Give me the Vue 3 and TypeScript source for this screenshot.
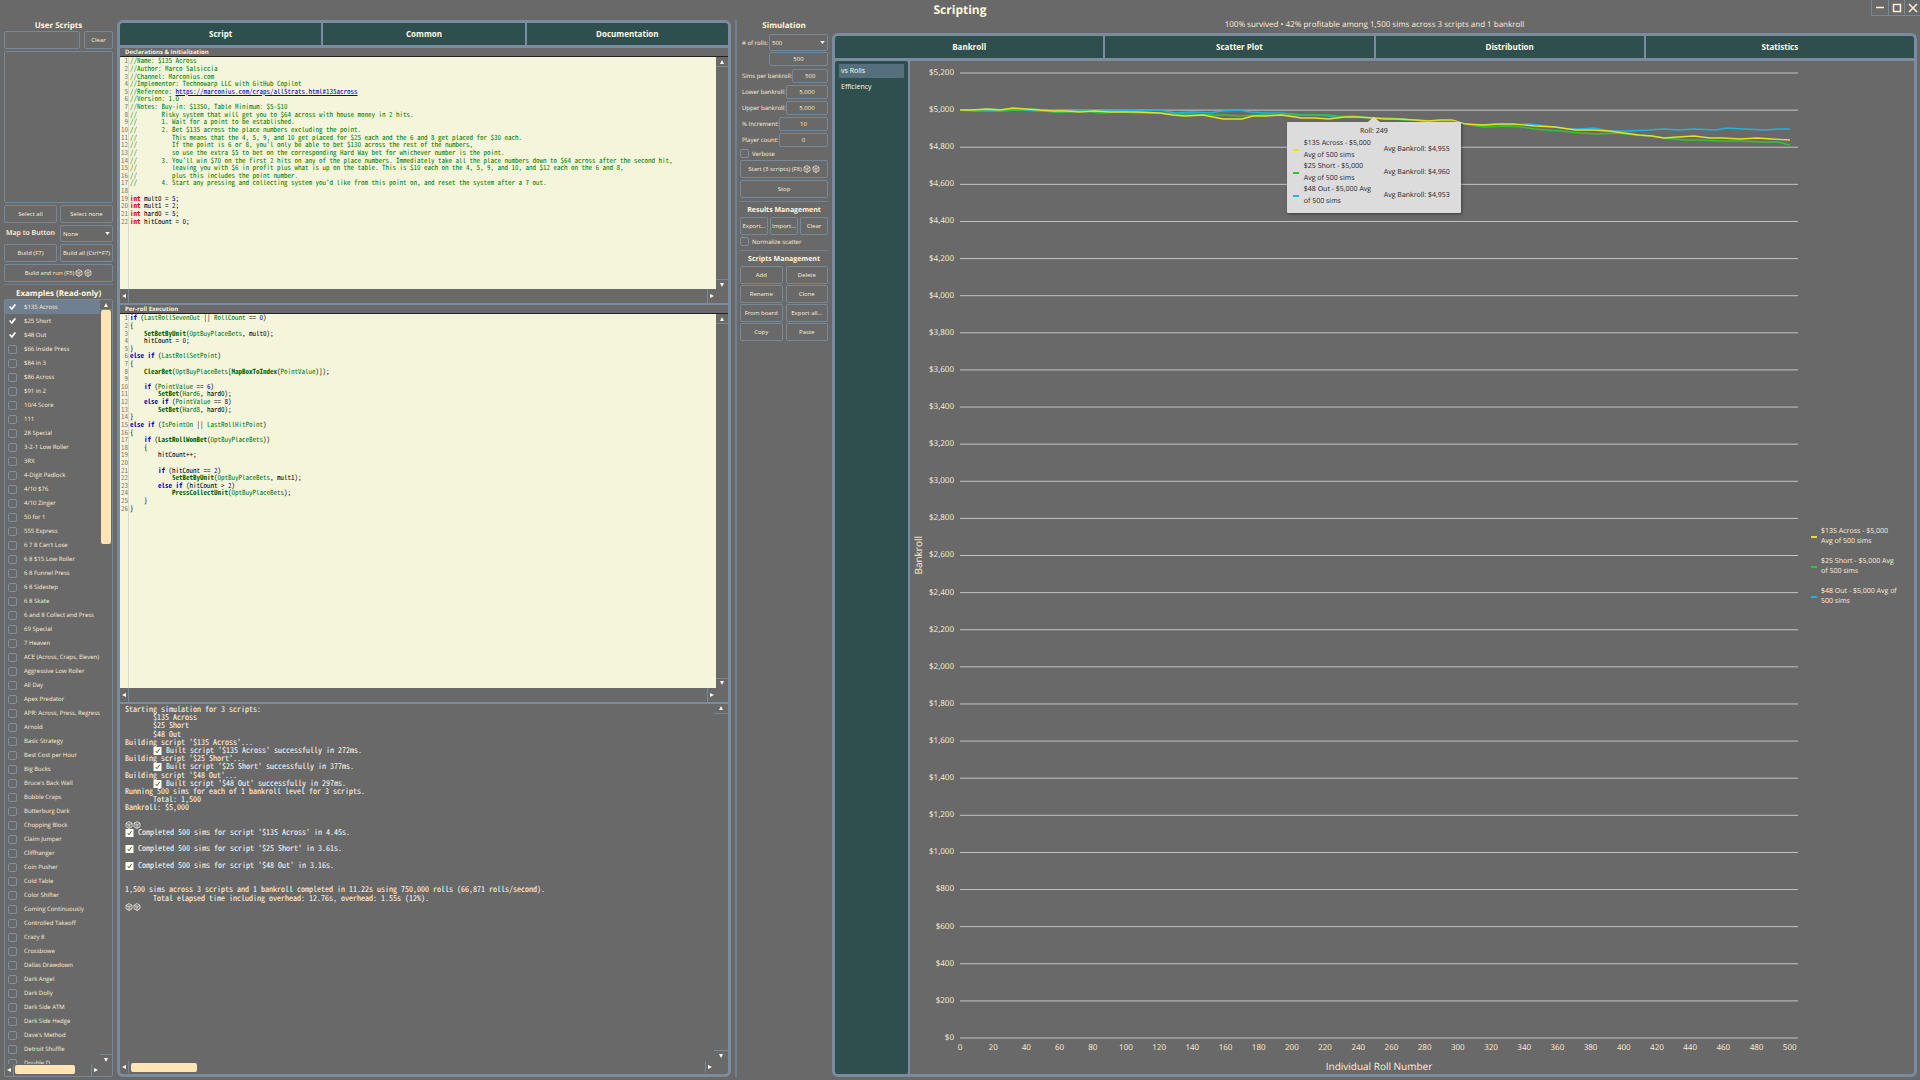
<script setup lang="ts">
import { defineComponent, h, ref } from 'vue'

interface Token { text: string; kind: string }
interface Series { legend: string; tip: string; color: string; avg: string; path: string }

const examples = ref([
  '$135 Across', '$25 Short', '$48 Out', '$66 Inside Press', '$84 in 3', '$86 Across', '$91 in 2',
  '10/4 Score', '111', '28 Special', '3-2-1 Low Roller', '3RX', '4-Digit Padlock', '4/10 $76',
  '4/10 Zinger', '50 for 1', '555 Express', "6 7 8 Can't Lose", '6 8 $15 Low Roller', '6 8 Funnel Press',
  '6 8 Sidestep', '6 8 Skate', '6 and 8 Collect and Press', '69 Special', '7 Heaven',
  'ACE (Across, Craps, Eleven)', 'Aggressive Low Roller', 'All Day', 'Apex Predator',
  'APR: Across, Press, Regress', 'Arnold', 'Basic Strategy', 'Best Cost per Hour', 'Big Bucks',
  "Bruce's Back Wall", 'Bubble Craps', 'Butterburg Dark', 'Chopping Block', 'Claim Jumper',
  'Cliffhanger', 'Coin Pusher', 'Cold Table', 'Color Shifter', 'Coming Continuously',
  'Controlled Takeoff', 'Crazy 8', 'Crossbowe', 'Dallas Drawdown', 'Dark Angel', 'Dark Dolly',
  'Dark Side ATM', 'Dark Side Hedge', "Dave's Method", 'Detroit Shuffle', 'Double D',
].map((name, i) => ({ name, checked: i < 3 })))

const declarations = `//Name: $135 Across
//Author: Marco Salsiccia
//Channel: Marconius.com
//Implementor: Technowarp LLC with GitHub Copilot
//Reference: https://marconius.com/craps/allStrats.html#135across
//Version: 1.0
//Notes: Buy-in: $1350, Table Minimum: $5-$10
//       Risky system that will get you to $64 across with house money in 2 hits.
//       1. Wait for a point to be established.
//       2. Bet $135 across the place numbers excluding the point.
//          This means that the 4, 5, 9, and 10 get placed for $25 each and the 6 and 8 get placed for $30 each.
//          If the point is 6 or 8, you'l only be able to bet $130 across the rest of the numbers,
//          so use the extra $5 to bet on the corresponding Hard Way bet for whichever number is the point.
//       3. You'll win $70 on the first 2 hits on any of the place numbers. Immediately take all the place numbers down to $64 across after the second hit,
//          leaving you with $6 in profit plus what is up on the table. This is $10 each on the 4, 5, 9, and 10, and $12 each on the 6 and 8,
//          plus this includes the point number.
//       4. Start any pressing and collecting system you'd like from this point on, and reset the system after a 7 out.

int mult0 = 5;
int mult1 = 2;
int hard0 = 5;
int hitCount = 0;`

const perRoll = `if (LastRollSevenOut || RollCount == 0)
{
    SetBetByUnit(OptBuyPlaceBets, mult0);
    hitCount = 0;
}
else if (LastRollSetPoint)
{
    ClearBet(OptBuyPlaceBets[MapBoxToIndex(PointValue)]);

    if (PointValue == 6)
        SetBet(Hard6, hard0);
    else if (PointValue == 8)
        SetBet(Hard8, hard0);
}
else if (IsPointOn || LastRollHitPoint)
{
    if (LastRollWonBet(OptBuyPlaceBets))
    {
        hitCount++;

        if (hitCount == 2)
            SetBetByUnit(OptBuyPlaceBets, mult1);
        else if (hitCount > 2)
            PressCollectUnit(OptBuyPlaceBets);
    }
}`

function tokenize(line: string): Token[] {
  if (line.startsWith('//')) {
    const at = line.indexOf('https://')
    if (at < 0) return [{ text: line, kind: 'comment' }]
    return [{ text: line.slice(0, at), kind: 'comment' }, { text: line.slice(at), kind: 'link' }]
  }
  const parts = line.match(/[A-Za-z_]\w*\(?|\d+|[^A-Za-z_\d]+/g) ?? []
  return parts.flatMap((p): Token[] => {
    if (p === 'int') return [{ text: p, kind: 'type' }]
    if (p === 'if' || p === 'else') return [{ text: p, kind: 'keyword' }]
    if (/^\d/.test(p)) return [{ text: p, kind: 'number' }]
    if (p.endsWith('(')) return [{ text: p.slice(0, -1), kind: 'call' }, { text: '(', kind: 'plain' }]
    if (/^[A-Z]/.test(p)) return [{ text: p, kind: 'member' }]
    return [{ text: p, kind: 'plain' }]
  })
}

const editors = [
  { title: 'Declarations & Initialization', cls: 'decl', lines: declarations.split('\n').map(tokenize) },
  { title: 'Per-roll Execution', cls: 'roll', lines: perRoll.split('\n').map(tokenize) },
]

const log: { text: string; icon?: 'ok' | 'dice'; indent?: boolean }[] = [
  { text: 'Starting simulation for 3 scripts:' },
  { text: '$135 Across', indent: true },
  { text: '$25 Short', indent: true },
  { text: '$48 Out', indent: true },
  { text: "Building script '$135 Across'..." },
  { text: "Built script '$135 Across' successfully in 272ms.", icon: 'ok', indent: true },
  { text: "Building script '$25 Short'..." },
  { text: "Built script '$25 Short' successfully in 377ms.", icon: 'ok', indent: true },
  { text: "Building script '$48 Out'..." },
  { text: "Built script '$48 Out' successfully in 297ms.", icon: 'ok', indent: true },
  { text: 'Running 500 sims for each of 1 bankroll level for 3 scripts.' },
  { text: 'Total: 1,500', indent: true },
  { text: 'Bankroll: $5,000' },
  { text: '' },
  { text: '', icon: 'dice' },
  { text: "Completed 500 sims for script '$135 Across' in 4.45s.", icon: 'ok' },
  { text: '' },
  { text: "Completed 500 sims for script '$25 Short' in 3.61s.", icon: 'ok' },
  { text: '' },
  { text: "Completed 500 sims for script '$48 Out' in 3.16s.", icon: 'ok' },
  { text: '' },
  { text: '' },
  { text: '1,500 sims across 3 scripts and 1 bankroll completed in 11.22s using 750,000 rolls (66,871 rolls/second).' },
  { text: 'Total elapsed time including overhead: 12.76s, overhead: 1.55s (12%).', indent: true },
  { text: '', icon: 'dice' },
]

const params = ref([
  { id: 'sims', label: 'Sims per bankroll:', value: '500', width: 'w36' },
  { id: 'lower', label: 'Lower bankroll:', value: '5,000', width: 'w42' },
  { id: 'upper', label: 'Upper bankroll:', value: '5,000', width: 'w42' },
  { id: 'increment', label: '% Increment:', value: '10', width: 'w49' },
  { id: 'players', label: 'Player count:', value: '0', width: 'w49' },
])
const scriptActions = ['Add', 'Delete', 'Rename', 'Clone', 'From board', 'Export all...', 'Copy', 'Paste']
const scriptTabs = ['Script', 'Common', 'Documentation']
const chartTabs = ['Bankroll', 'Scatter Plot', 'Distribution', 'Statistics']

const yLabels = Array.from({ length: 27 }, (_, i) => '$' + (5200 - i * 200).toLocaleString('en-US'))
const xLabels = Array.from({ length: 26 }, (_, i) => i * 20)
const gridY = Array.from({ length: 27 }, (_, i) => (i * 965) / 26)

const series: Series[] = [
  {
    legend: '$48 Out - $5,000 Avg of\n500 sims', tip: '$48 Out - $5,000 Avg\nof 500 sims', color: '#1fb4dc', avg: '$4,953',
    path: '0,37 20,38 40,38 60,37 80,38 100,39 120,38 140,37 160,37 180,38 200,37 215,40 232,39 250,40 262,38 280,37 290,39 305,40 321,40 342,42 360,42 376,44 392,43 413,45 428,45 443,46 460,48 477,49 500,50 519,53 534,51 548,52 570,51 595,54 607,56 620,56 634,55 650,58 666,58 690,57 704,56 718,57 735,56 755,57 767,55 784,56 805,57 818,56 830,56',
  },
  {
    legend: '$25 Short - $5,000 Avg\nof 500 sims', tip: '$25 Short - $5,000\nAvg of 500 sims', color: '#33c433', avg: '$4,960',
    path: '0,37 15,38 30,36 45,37 60,37 75,36 93,39 110,39 125,38 140,40 160,39 180,40 200,40 215,41 232,41 250,42 265,42 280,43 300,42 325,42 345,42 369,42 384,44 400,44 413,45 428,45 443,47 458,47 473,48 488,48 500,50 523,54 545,53 561,54 575,56 586,57 600,58 620,60 637,61 658,60 675,62 690,63 704,65 725,67 740,67 759,68 780,68 800,69 818,69 830,72',
  },
  {
    legend: '$135 Across - $5,000\nAvg of 500 sims', tip: '$135 Across - $5,000\nAvg of 500 sims', color: '#e6e01e', avg: '$4,955',
    path: '0,37 12,37 27,36 40,37 53,35 66,36 80,37 93,38 106,38 120,39 135,38 150,39 175,39 200,40 213,42 225,43 243,42 253,44 263,46 282,46 293,43 306,43 321,42 342,45 355,45 369,46 384,44 397,44 413,45 425,46 439,46 455,47 468,48 480,47 492,47 506,51 523,52 540,51 553,51 575,53 595,54 616,57 632,57 649,58 664,60 679,62 692,63 704,65 718,64 734,63 750,65 763,65 780,66 797,65 812,66 830,67',
  },
]
const legend = [...series].reverse()

const Dice = defineComponent(() => () =>
  h('svg', { viewBox: '0 0 16 16', width: 8, height: 8, fill: 'none', stroke: 'currentColor', 'stroke-width': 1.4, 'aria-hidden': 'true', style: { flex: 'none' } }, [
    h('path', { d: 'M8 1 14 4.5v7L8 15l-6-3.500v-7zM2 4.500l6 3.500 6-3.500M8 8v7' }),
    h('path', { d: 'M7.200 4.300h1.600M4.500 8.500v.8M5.500 11.500v.8M10.500 9.500v.8M12 10.500v.8', 'stroke-width': 1.8 }),
  ]))
const Arrow = defineComponent((p: { dir: string }) => () => {
  const d: Record<string, string> = { up: 'M1 5 3 1l2 4z', down: 'M1 1h4L3 5z', left: 'M5 1v4L1 3z', right: 'M1 1v4l4-2z' }
  return h('svg', { viewBox: '0 0 6 6', width: 6, height: 6, fill: '#fff8e6', 'aria-hidden': 'true' }, [h('path', { d: d[p.dir] })])
}, { props: ['dir'] })
</script>

<template>
  <div class="app">
    <header class="titlebar">
      <span></span>
      <h1>Scripting</h1>
      <div class="window-buttons">
        <button aria-label="Minimize"><svg viewBox="0 0 10 10" width="10" height="10"><path d="M1 4.500h8" /></svg></button>
        <button aria-label="Maximize"><svg viewBox="0 0 10 10" width="10" height="10"><path d="M1.500 1.500h7v7h-7z" /></svg></button>
        <button aria-label="Close"><svg viewBox="0 0 10 10" width="10" height="10"><path d="M1 1l8 8M9 1l-8 8" /></svg></button>
      </div>
    </header>

    <aside class="scripts">
      <h2>User Scripts</h2>
      <div class="search">
        <input type="text" aria-label="Filter scripts" />
        <button class="btn">Clear</button>
      </div>
      <div class="user-list"></div>
      <div class="pair">
        <button class="btn">Select all</button>
        <button class="btn">Select none</button>
      </div>
      <div class="pair">
        <label class="map" for="map">Map to Button</label>
        <span class="select"><select id="map"><option>None</option></select><svg viewBox="0 0 6 4" width="5" height="3"><path d="M0 0h6L3 4z" /></svg></span>
      </div>
      <div class="pair">
        <button class="btn">Build (F7)</button>
        <button class="btn">Build all (Ctrl+F7)</button>
      </div>
      <button class="btn wide">Build and run (F5) <Dice /><Dice /></button>
      <hr />
      <h2>Examples (Read-only)</h2>
      <div class="examples">
        <ul>
          <li v-for="(e, i) in examples" :key="e.name" :class="{ selected: i === 0 }">
            <label><input type="checkbox" v-model="e.checked" />{{ e.name }}</label>
          </li>
        </ul>
        <div class="vbar">
          <button aria-label="Scroll up"><Arrow dir="up" /></button>
          <div class="track"><div class="thumb"></div></div>
          <button aria-label="Scroll down"><Arrow dir="down" /></button>
        </div>
        <div class="hbar">
          <button aria-label="Scroll left"><Arrow dir="left" /></button>
          <div class="track"><div class="thumb"></div></div>
          <button aria-label="Scroll right"><Arrow dir="right" /></button>
        </div>
      </div>
    </aside>

    <main class="panel center">
      <nav class="tabs"><button v-for="t in scriptTabs" :key="t">{{ t }}</button></nav>
      <section v-for="ed in editors" :key="ed.cls" class="editor" :class="ed.cls">
        <h3>{{ ed.title }}</h3>
        <div class="code">
          <div class="lines">
            <div v-for="(line, n) in ed.lines" :key="n" class="line">
              <span class="no">{{ n + 1 }}</span>
              <code><template v-for="(t, k) in line" :key="k"><a v-if="t.kind === 'link'" :href="t.text">{{ t.text }}</a><span v-else :class="t.kind">{{ t.text }}</span></template></code>
            </div>
          </div>
        </div>
        <div class="vbar">
          <button aria-label="Scroll up"><Arrow dir="up" /></button>
          <div class="track"></div>
          <button aria-label="Scroll down"><Arrow dir="down" /></button>
        </div>
        <div class="hbar">
          <button aria-label="Scroll left"><Arrow dir="left" /></button>
          <div class="track"></div>
          <button aria-label="Scroll right"><Arrow dir="right" /></button>
        </div>
      </section>
      <section class="console">
        <div class="log">
          <div v-for="(l, i) in log" :key="i" class="entry" :class="{ indent: l.indent }">
            <svg v-if="l.icon === 'ok'" viewBox="0 0 9 9" width="9" height="8"><rect width="9" height="9" fill="#fffff0" /><path d="M2.500 4.500 4 6.500 7 2" fill="none" stroke="#444" /></svg>
            <template v-if="l.icon === 'dice'"><Dice /><Dice /></template>
            <span>{{ l.text }}</span>
          </div>
        </div>
        <div class="vbar">
          <button aria-label="Scroll up"><Arrow dir="up" /></button>
          <div class="track"></div>
          <button aria-label="Scroll down"><Arrow dir="down" /></button>
        </div>
        <div class="hbar">
          <button aria-label="Scroll left"><Arrow dir="left" /></button>
          <div class="track"><div class="thumb"></div></div>
          <button aria-label="Scroll right"><Arrow dir="right" /></button>
        </div>
      </section>
    </main>

    <aside class="simulation">
      <h2 class="main-title">Simulation</h2>
      <div class="field first">
        <label for="rolls"># of rolls:</label>
        <span class="select w59"><select id="rolls"><option>500</option></select><svg viewBox="0 0 6 4" width="5" height="3"><path d="M0 0h6L3 4z" /></svg></span>
      </div>
      <div class="field end"><input class="w59" type="text" value="500" aria-label="Custom number of rolls" /></div>
      <div v-for="p in params" :key="p.id" class="field">
        <label :for="p.id">{{ p.label }}</label>
        <input :id="p.id" :class="p.width" type="text" v-model="p.value" />
      </div>
      <label class="check"><input type="checkbox" />Verbose</label>
      <button class="btn wide">Start (3 scripts) (F8) <Dice /><Dice /></button>
      <button class="btn wide">Stop</button>
      <hr />
      <h2>Results Management</h2>
      <div class="triple">
        <button class="btn">Export...</button>
        <button class="btn">Import...</button>
        <button class="btn">Clear</button>
      </div>
      <label class="check norm"><input type="checkbox" />Normalize scatter</label>
      <hr />
      <h2>Scripts Management</h2>
      <div class="actions"><button v-for="a in scriptActions" :key="a" class="btn">{{ a }}</button></div>
    </aside>

    <section class="results">
      <p class="summary">100% survived • 42% profitable among 1,500 sims across 3 scripts and 1 bankroll</p>
      <div class="panel">
        <nav class="tabs"><button v-for="t in chartTabs" :key="t">{{ t }}</button></nav>
        <div class="body">
          <nav class="views">
            <button class="active">vs Rolls</button>
            <button>Efficiency</button>
          </nav>
          <div class="chart">
            <div class="y-title"><span>Bankroll</span></div>
            <div class="y-labels"><span v-for="y in yLabels" :key="y">{{ y }}</span></div>
            <div class="plot">
              <svg viewBox="0 0 838 965" preserveAspectRatio="none">
                <line v-for="y in gridY" :key="y" x1="0" x2="838" :y1="y" :y2="y" />
                <polyline v-for="s in series" :key="s.legend" :points="s.path" :stroke="s.color" />
              </svg>
              <div class="tooltip">
                <div class="tip-title">Roll: 249</div>
                <div v-for="s in legend" :key="s.tip" class="tip-row">
                  <i :style="{ background: s.color }"></i>
                  <span class="tip-name">{{ s.tip }}</span>
                  <span class="tip-value">Avg Bankroll: {{ s.avg }}</span>
                </div>
              </div>
            </div>
            <div class="legend">
              <div v-for="s in legend" :key="s.legend"><i :style="{ background: s.color }"></i><span>{{ s.legend }}</span></div>
            </div>
            <div class="x-labels"><span v-for="x in xLabels" :key="x"><b>{{ x }}</b></span></div>
            <div class="x-title">Individual Roll Number</div>
          </div>
        </div>
      </div>
    </section>
  </div>
</template>

<style>
body { background: #696969; }
</style>

<style scoped>
.app {
  --line: #778899;
  --edge: #708090;
  --text: #ffefd5;
  --teal: #2f4f4f;
  --thumb: #ffe4b5;
  box-sizing: border-box;
  height: 100vh;
  min-height: 720px;
  display: grid;
  grid-template-columns: 117px minmax(0, 614fr) 101px minmax(0, 1085fr);
  grid-template-rows: 20px minmax(0, 1fr);
  padding: 0 3px 3px 0;
  background: #696969;
  color: var(--text);
  font: 6px/8px "Open Sans", "Noto Sans", sans-serif;
  text-rendering: geometricPrecision;
}
.app *, .app *::before { box-sizing: border-box; }
button, input, select { font: inherit; color: inherit; background: none; border: 0; margin: 0; padding: 0; min-width: 0; outline: none; }
h1, h2, h3, p, ul { margin: 0; padding: 0; font-size: inherit; }
h2 { font-size: 8px; line-height: 10px; font-weight: 700; text-align: center; color: #fff8dc; white-space: nowrap; }
hr { width: 100%; height: 1px; border: 0; margin: 0; background: var(--edge); }

.titlebar { grid-column: 1 / -1; display: grid; grid-template-columns: 1fr auto 1fr; margin-right: -3px; }
.titlebar h1 { font-size: 12px; line-height: 20px; font-weight: 700; color: #fff8dc; }
.window-buttons { justify-self: end; display: flex; height: 16px; border: solid var(--line); border-width: 0 0 1px 1px; }
.window-buttons button { width: 16px; height: 15px; display: grid; place-items: center; }
.window-buttons button + button { border-left: 1px solid var(--line); }
.window-buttons svg { fill: none; stroke: #ffefd5; stroke-width: 1.5; }

.btn { height: 18px; border: 1px solid var(--line); border-radius: 2px; display: flex; align-items: center; justify-content: center; gap: 1px; white-space: nowrap; }
.wide { width: 100%; flex: none; }
input[type='text'] { border: 1px solid var(--line); border-radius: 2px; }
input[type='checkbox'] { appearance: none; flex: none; width: 9px; height: 9px; border: 1px solid #8090a0; border-radius: 2px; display: grid; place-items: center; }
input[type='checkbox']:checked { border-color: transparent; }
input[type='checkbox']:checked::before { content: ''; width: 7px; height: 7px; background: #fff; clip-path: polygon(0 50%, 18% 36%, 38% 62%, 82% 5%, 100% 20%, 42% 95%); }
.select { position: relative; display: block; height: 17px; }
.select select { appearance: none; width: 100%; height: 100%; padding-left: 2px; border: 1px solid var(--line); border-radius: 2px; }
.select svg { position: absolute; right: 3px; top: 7px; fill: #fff; pointer-events: none; }

.scripts { display: flex; flex-direction: column; padding: 0 4px; min-height: 0; }
.scripts > h2 { margin-top: 1px; }
.search { display: flex; gap: 4px; }
.search input { flex: 1; height: 18px; }
.search .btn { width: 29px; }
.user-list { flex: none; height: 152px; margin: 2px 0; border: 1px solid var(--line); border-radius: 2px; }
.pair { display: grid; grid-template-columns: 1fr 1fr; gap: 3px; margin-bottom: 2px; align-items: center; }
.map { font-size: 7px; font-weight: 600; text-align: center; white-space: nowrap; color: #fff8dc; }
.scripts > hr { margin: 2px 0 3px; flex: none; }
.examples { flex: 1; min-height: 0; display: grid; grid-template: minmax(0, 1fr) 12px / minmax(0, 1fr) 12px; border: 1px solid var(--line); border-radius: 2px; }
.examples ul { list-style: none; overflow: hidden; min-height: 0; }
.examples li label { display: flex; align-items: center; gap: 7px; height: 14px; padding-left: 3px; white-space: nowrap; }
.examples .selected { background: var(--edge); }
.examples .vbar .thumb { height: 234px; width: 10px; margin-left: 1px; }

.vbar { display: flex; flex-direction: column; min-height: 0; }
.hbar { display: flex; }
.track { flex: 1; min-width: 0; min-height: 0; }
.thumb { background: var(--thumb); border-radius: 2px; }
.vbar button, .hbar button { flex: none; display: grid; place-items: center; }
.vbar button { height: 10px; }
.vbar button:first-child { border-bottom: 1px solid var(--line); }
.vbar button:last-child { border-top: 1px solid var(--line); }
.hbar button { width: 9px; }
.hbar button:first-child { border-right: 1px solid var(--line); }
.hbar button:last-child { border-left: 1px solid var(--line); }
.hbar .thumb { height: 9px; width: 60px; margin: 1px 0 0 1px; }

.panel { border: 3px solid #7a8c9e; border-radius: 6px; display: flex; flex-direction: column; min-height: 0; min-width: 0; }
.tabs { flex: none; display: flex; height: 25px; background: var(--teal); border-bottom: 3px solid #7a8c9e; border-radius: 3px 3px 0 0; }
.tabs button { flex: 1; font-size: 8px; font-weight: 700; color: #fffbe8; }
.tabs button + button { border-left: 2px solid #7a8c9e; }

.editor { flex: none; display: grid; grid-template: 9px minmax(0, 1fr) 14px / minmax(0, 1fr) 12px; border-bottom: 2px solid #7a8c9e; }
.editor h3 { grid-column: 1 / -1; padding-left: 5px; font-size: 6px; line-height: 8px; font-weight: 700; border-bottom: 1px solid #222; }
.decl { height: 257px; }
.roll { flex: 399 1 0; }
.console { flex: 372 1 0; min-height: 0; display: grid; grid-template: minmax(0, 1fr) 14px / minmax(0, 1fr) 14px; }
.code { background: #f5f5dc linear-gradient(#d8dcc8, #d8dcc8) 8px 0 / 1px 100% no-repeat; color: #000; overflow: hidden; padding-top: 1px; }
.lines { display: grid; grid-auto-rows: minmax(0, 1fr); }
.decl .lines { height: 168px; }
.roll .lines { height: 198px; }
.line, .log { font-family: "Noto Sans Mono CJK SC", "Liberation Mono", monospace; }
.line { display: flex; align-items: center; white-space: pre; font-size: 7px; line-height: 7px; }
.line .no { flex: none; width: 8px; margin-right: 2px; display: flex; justify-content: flex-end; color: #777; }
.line code { font: inherit; }
.comment { color: #008000; }
.line a { color: #0000c8; }
.type { color: #e00000; font-weight: 700; }
.keyword { color: #0000c0; font-weight: 700; }
.number { color: #00008b; }
.call { color: #006400; font-weight: 700; }
.member { color: #007a1a; }
.log { height: 205px; margin: 2px 0 0 5px; display: grid; grid-template-rows: repeat(25, minmax(0, 1fr)); font-size: 8px; color: #fffaf0; }
.entry { display: flex; align-items: center; white-space: pre; line-height: 8px; }
.entry.indent { padding-left: 28px; }
.entry svg + span { margin-left: 4px; }
.console .hbar { align-items: center; }
.console .hbar button { height: 12px; }
.console .hbar .thumb { width: 66px; margin: 0 0 0 2px; }

.simulation { display: flex; flex-direction: column; margin-left: 4px; padding: 0 4px 0 3px; border-left: 2px solid var(--edge); }
.simulation > h2 { font-size: 7px; }
.simulation > .main-title { font-size: 8px; margin: 1px 0 3px; }
.field { display: flex; align-items: center; justify-content: space-between; height: 14px; margin-bottom: 2px; padding-left: 2px; white-space: nowrap; }
.field.first { height: 17px; margin-bottom: 1px; }
.field.end { justify-content: flex-end; margin-bottom: 3px; }
.field input { height: 14px; text-align: center; }
.w36 { width: 36px; }
.w42 { width: 42px; }
.w49 { width: 49px; }
.w59 { width: 59px; }
.check { display: flex; align-items: center; gap: 3px; height: 9px; margin-bottom: 2px; }
.simulation > .wide { margin-bottom: 2px; }
.simulation > hr { margin: 1px 0 4px; }
.simulation > hr + h2 { margin-bottom: 1px; }
.triple { display: grid; grid-template-columns: repeat(3, minmax(0, 1fr)); gap: 2px; margin-bottom: 2px; }
.check.norm { margin-bottom: 3px; }
.actions { display: grid; grid-template-columns: 1fr 1fr; gap: 1px 3px; }

.results { display: flex; flex-direction: column; min-height: 0; min-width: 0; }
.summary { flex: none; height: 13px; font-size: 8px; line-height: 10px; text-align: center; }
.results .panel { flex: 1; }
.body { flex: 1; min-height: 0; display: flex; }
.views { width: 73px; padding: 3px 4px 0; display: flex; flex-direction: column; gap: 2px; background: var(--teal); border-radius: 3px; font-size: 7px; color: #fff8e6; }
.views button { height: 14px; padding-left: 2px; text-align: left; border-radius: 1px; }
.views .active { background: #566f7e; }
.chart { flex: 1; min-width: 0; border-left: 2px solid #7a8c9e; display: grid; grid-template: minmax(0, 1fr) 20px 16px / 15px 35px minmax(0, 838fr) 116px; padding-top: 12px; font-size: 8px; line-height: 10px; }
.y-title { display: grid; place-items: center; font-size: 10px; }
.y-title span { writing-mode: vertical-rl; transform: rotate(180deg); }
.y-labels { margin: -5px 6px -5px 0; display: flex; flex-direction: column; justify-content: space-between; align-items: flex-end; }
.plot { position: relative; min-height: 0; }
.plot > svg { display: block; width: 100%; height: 100%; overflow: visible; fill: none; }
.plot line { stroke: #c4c4c4; stroke-width: 1; vector-effect: non-scaling-stroke; }
.plot polyline { stroke-width: 1.3; vector-effect: non-scaling-stroke; }
.x-labels { grid-column: 3; display: flex; justify-content: space-between; margin-right: 8px; padding-top: 5px; }
.x-labels span { width: 0; display: flex; justify-content: center; }
.x-labels b { font-weight: 400; }
.x-title { grid-column: 3; text-align: center; font-size: 10px; line-height: 16px; }
.legend { display: flex; flex-direction: column; justify-content: center; gap: 10px; padding: 22px 0 0 13px; font-size: 7px; white-space: pre; }
.legend div { display: flex; align-items: center; gap: 4px; }
.legend i, .tip-row i { flex: none; width: 6px; height: 2px; }
.tooltip { position: absolute; left: 39%; top: 49px; width: 174px; height: 91px; padding: 5px 6px 0; background: #dcdcdc; border-radius: 1px; box-shadow: 1px 1px 3px #0006; color: #1b2430; font-size: 7px; }
.tooltip::before { content: ''; position: absolute; left: 81px; top: -5px; width: 12px; height: 5px; background: #dcdcdc; clip-path: polygon(50% 0, 100% 100%, 0 100%); }
.tip-title { text-align: center; margin-bottom: 1px; }
.tip-row { display: flex; align-items: center; height: 23px; line-height: 12px; white-space: pre; }
.tip-name { width: 76px; margin: 0 4px 0 5px; }
</style>
